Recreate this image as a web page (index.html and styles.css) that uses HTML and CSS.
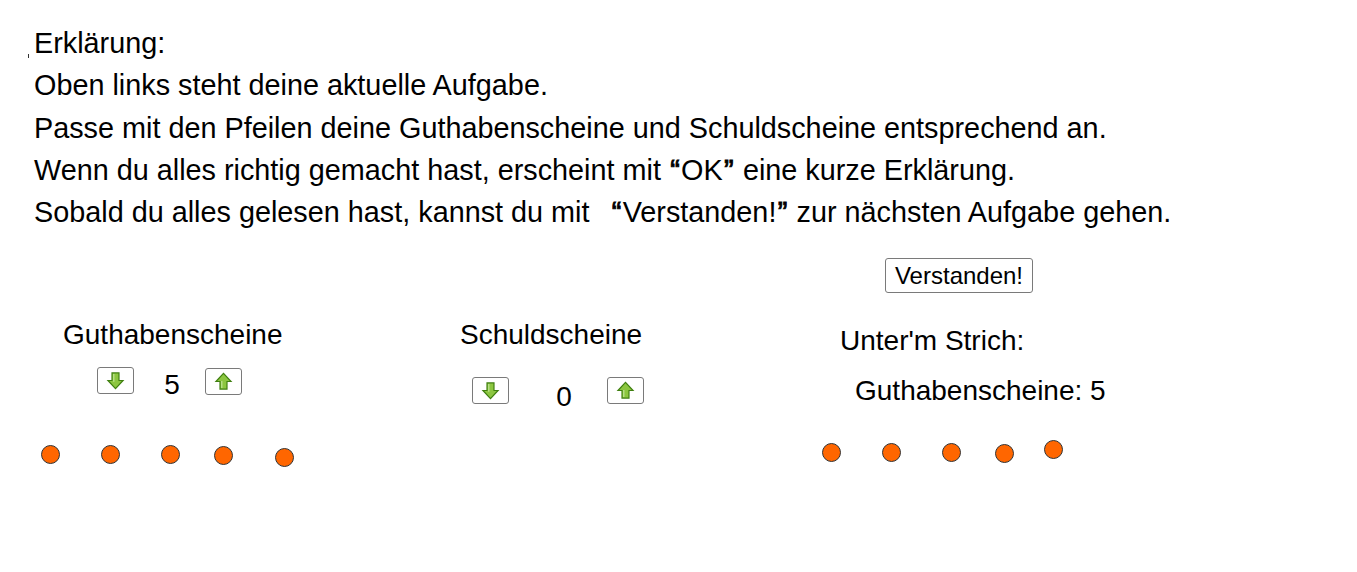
FILE: index.html
```html
<!DOCTYPE html>
<html lang="de">
<head>
<meta charset="utf-8">
<title>Guthabenscheine und Schuldscheine</title>
<link rel="stylesheet" href="styles.css">
</head>
<body>
<div class="applet">
  <span class="tick"></span>
  <div class="intro">
    <p>Erklärung:</p>
    <p>Oben links steht deine aktuelle Aufgabe.</p>
    <p>Passe mit den Pfeilen deine Guthabenscheine und Schuldscheine entsprechend an.</p>
    <p>Wenn du alles richtig gemacht hast, erscheint mit <span class="q">“</span>OK<span class="q">”</span> eine kurze Erklärung.</p>
    <p>Sobald du alles gelesen hast, kannst du mit &nbsp;<span class="q wide">“</span>Verstanden!<span class="q">”</span> zur nächsten Aufgabe gehen.</p>
  </div>

  <button class="btn-text verstanden">Verstanden!</button>

  <div class="label label-gut">Guthabenscheine</div>
  <div class="label label-schuld">Schuldscheine</div>
  <div class="label label-unter">Unter'm Strich:</div>
  <div class="label label-summe">Guthabenscheine: 5</div>

  <button class="arrow gut-down" aria-label="weniger">
    <svg viewBox="0 0 18 18" width="21" height="21"><path class="arr" d="M6 2.5h6v6.5h3.5L9 16 2.5 9H6z"/><path class="hl" d="M7.5 3.5v6.5"/></svg>
  </button>
  <div class="value val-gut">5</div>
  <button class="arrow gut-up" aria-label="mehr">
    <svg viewBox="0 0 18 18" width="21" height="21"><path class="arr" d="M6 15.5h6V9h3.5L9 2 2.5 9H6z"/><path class="hl" d="M7.5 14.5V8.5"/></svg>
  </button>

  <button class="arrow schuld-down" aria-label="weniger">
    <svg viewBox="0 0 18 18" width="21" height="21"><path class="arr" d="M6 2.5h6v6.5h3.5L9 16 2.5 9H6z"/><path class="hl" d="M7.5 3.5v6.5"/></svg>
  </button>
  <div class="value val-schuld">0</div>
  <button class="arrow schuld-up" aria-label="mehr">
    <svg viewBox="0 0 18 18" width="21" height="21"><path class="arr" d="M6 15.5h6V9h3.5L9 2 2.5 9H6z"/><path class="hl" d="M7.5 14.5V8.5"/></svg>
  </button>

  <span class="dot" style="left:41px;top:445px"></span>
  <span class="dot" style="left:101px;top:445px"></span>
  <span class="dot" style="left:161px;top:445px"></span>
  <span class="dot" style="left:214px;top:446px"></span>
  <span class="dot" style="left:275px;top:448px"></span>

  <span class="dot" style="left:822px;top:443px"></span>
  <span class="dot" style="left:882px;top:443px"></span>
  <span class="dot" style="left:942px;top:443px"></span>
  <span class="dot" style="left:995px;top:444px"></span>
  <span class="dot" style="left:1044px;top:440px"></span>
</div>
</body>
</html>
```
FILE: styles.css
```css
html, body {
  margin: 0;
  padding: 0;
  background: #ffffff;
}

body {
  font-family: "Liberation Sans", Arial, sans-serif;
  color: #000000;
}

.applet {
  position: relative;
  width: 1357px;
  height: 572px;
  overflow: hidden;
}

.tick {
  position: absolute;
  left: 28px;
  top: 54px;
  width: 1px;
  height: 4px;
  background: #333333;
}

.intro {
  padding: 22px 0 0 34px;
  font-size: 28.8px;
  line-height: 42.3px;
}

.intro p {
  margin: 0;
  white-space: nowrap;
}

.intro .q {
  -webkit-text-stroke: 0.9px #000000;
  padding: 0 1.3px;
}

.intro .q.wide {
  margin-left: 5px;
}

.btn-text {
  position: absolute;
  left: 885px;
  top: 258px;
  width: 148px;
  height: 35px;
  padding: 0;
  background: #ffffff;
  border: 1px solid #7a7a7a;
  border-radius: 3px;
  font-family: "Liberation Sans", Arial, sans-serif;
  font-size: 24px;
  color: #000000;
}

.label {
  position: absolute;
  font-size: 28px;
  line-height: 32px;
  white-space: nowrap;
}

.label-gut { left: 63px; top: 319px; }
.label-schuld { left: 460px; top: 319px; }
.label-unter { left: 840px; top: 325px; }
.label-summe { left: 855px; top: 375px; }

.arrow {
  position: absolute;
  width: 37px;
  height: 27px;
  padding: 0;
  background: #ffffff;
  border: 1px solid #7a7a7a;
  border-radius: 3px;
  display: flex;
  align-items: center;
  justify-content: center;
}

.arrow .arr {
  fill: #8cc640;
  stroke: #3f7f10;
  stroke-width: 1;
  stroke-linejoin: miter;
}

.arrow .hl {
  stroke: #b9e08a;
  stroke-width: 1.2;
  fill: none;
}

.gut-down { left: 97px; top: 367px; }
.gut-up { left: 205px; top: 368px; }
.schuld-down { left: 472px; top: 377px; }
.schuld-up { left: 607px; top: 377px; }

.value {
  position: absolute;
  font-size: 28px;
  line-height: 32px;
  width: 30px;
  text-align: center;
}

.val-gut { left: 157px; top: 369px; }
.val-schuld { left: 549px; top: 381px; }

.dot {
  position: absolute;
  width: 17px;
  height: 17px;
  border-radius: 50%;
  background: #ff6600;
  border: 1px solid #333333;
}
```
